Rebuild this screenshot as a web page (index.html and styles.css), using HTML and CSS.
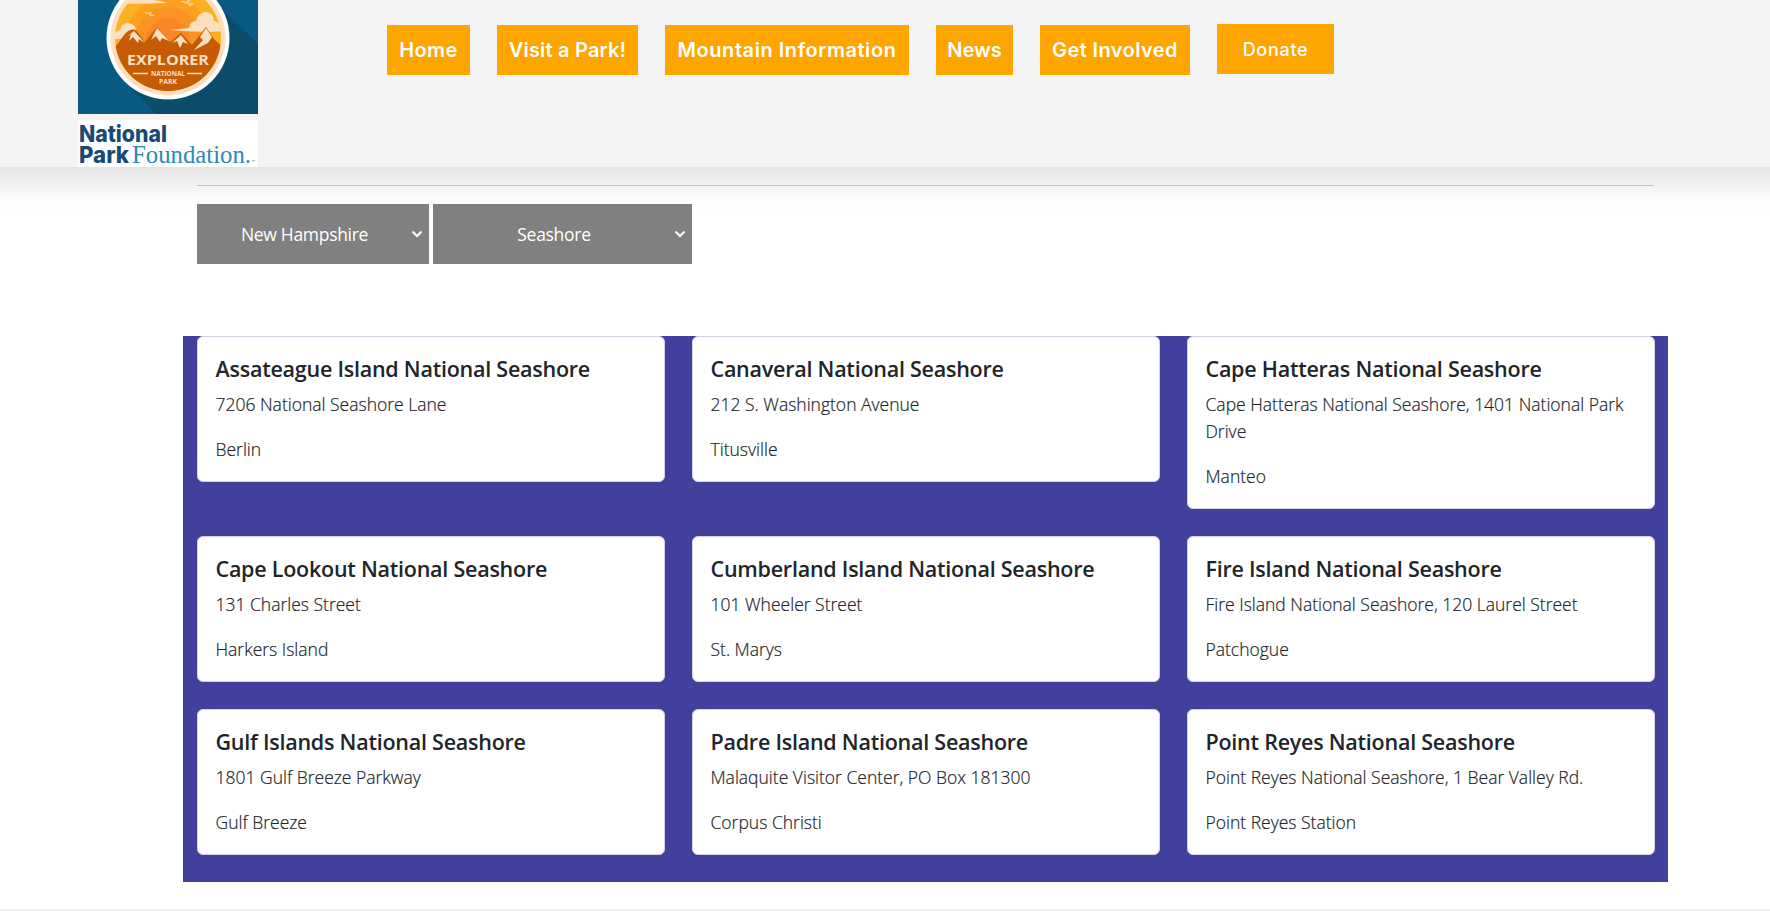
FILE: index.html
```html
<!DOCTYPE html>
<html lang="en">
<head>
<meta charset="utf-8">
<title>National Parks</title>
<link rel="stylesheet" href="styles.css">
</head>
<body>
<header class="header">
  <div class="logos">
    <svg class="badge" width="180" height="114" viewBox="0 0 180 114">
      <defs><clipPath id="disc"><circle cx="90" cy="38" r="53"/></clipPath></defs>
      <rect width="180" height="114" fill="#085a82"/>
      <path d="M134 0L180 44V114H78L46 80Z" fill="#0c4c6b"/>
      <circle cx="90" cy="38" r="61.500" fill="#fff"/>
      <circle cx="90" cy="38" r="57.500" fill="#fbdfbf"/>
      <g clip-path="url(#disc)">
        <rect x="30" y="-20" width="120" height="120" fill="#fdb022"/>
        <circle cx="90" cy="40" r="43" fill="#fea01c"/>
        <circle cx="90" cy="40" r="33" fill="#fb9323"/>
        <circle cx="90" cy="40" r="22" fill="#f98725"/>
        <path d="M36 4Q62 4 89 3Q80 0 75 0H40Z" fill="#fbdfbf"/>
        <path d="M92 30L111 28Q112 21 118 21Q120 12 128 12Q136 13 136 21Q143 22 145 31Q120 33 92 30Z" fill="#fbdfbf"/>
        <path d="M34 39Q36 31 42 30Q43 23 50 23Q58 24 58 31L60 39Z" fill="#fbdfbf"/>
        <path d="M30 52L38 46L46 35Q52 28 58 30L67 42L79 27L92 42L103 33L114 45L128 27L136 39L150 52V96H30Z" fill="#c55b05"/>
        <path d="M56 31L67 43L61 39L60 43L55 37L51 41L53 34L46 39ZM79 28L91 41L84 38L82 42L78 36L73 40ZM103 35L110 44L105 42L102 48L99 41L94 43ZM128 28L134 37L130 43L116 50L125 40L122 37Z" fill="#fbdfbf"/>
      </g>
      <path d="M67 12l4 2l2-2l-1 4l4-1M103 1l5 2l3-3l-1 4l5 0l-4 2" fill="none" stroke="#fbdfbf"/>
      <path d="M55 73.500h15M109 73.500h15" stroke="#fbdfbf" stroke-width="1.300"/>
      <g class="badge-text" fill="#fbdfbf" text-anchor="middle">
        <text x="90" y="65" font-size="14.500" textLength="82" lengthAdjust="spacingAndGlyphs">EXPLORER</text>
        <text x="90" y="76" font-size="7" textLength="34" lengthAdjust="spacingAndGlyphs">NATIONAL</text>
        <text x="90" y="84" font-size="7" textLength="18" lengthAdjust="spacingAndGlyphs">PARK</text>
      </g>
    </svg>
    <svg class="foundation" width="180" height="47" viewBox="0 0 180 47">
      <rect width="180" height="47" fill="#fff"/>
      <text class="foundation-bold" x="1" y="22" textLength="88" lengthAdjust="spacingAndGlyphs">National</text>
      <text class="foundation-bold" x="1" y="43" textLength="50" lengthAdjust="spacingAndGlyphs">Park</text>
      <text class="foundation-serif" x="54" y="43" textLength="119" lengthAdjust="spacingAndGlyphs">Foundation.</text>
      <text class="foundation-tm" x="174" y="43">™</text>
    </svg>
  </div>
  <nav class="nav">
    <a class="nav-link home">Home</a>
    <a class="nav-link visit">Visit a Park!</a>
    <a class="nav-link mountain">Mountain Information</a>
    <a class="nav-link news">News</a>
    <a class="nav-link involved">Get Involved</a>
    <a class="nav-link donate">Donate</a>
  </nav>
</header>
<main class="container">
  <hr class="rule">
  <div class="filters">
    <div class="select state"><span class="select-text">New Hampshire</span><svg class="chevron" width="12" height="8" viewBox="0 0 12 8"><path d="M1.500 1.500L6 6L10.500 1.500"/></svg></div>
    <div class="select type"><span class="select-text">Seashore</span><svg class="chevron" width="12" height="8" viewBox="0 0 12 8"><path d="M1.500 1.500L6 6L10.500 1.500"/></svg></div>
  </div>
  <section class="results">
    <article class="card"><h5>Assateague Island National Seashore</h5><p>7206 National Seashore Lane</p><p>Berlin</p></article>
    <article class="card"><h5>Canaveral National Seashore</h5><p>212 S. Washington Avenue</p><p>Titusville</p></article>
    <article class="card"><h5>Cape Hatteras National Seashore</h5><p>Cape Hatteras National Seashore, 1401 National Park Drive</p><p>Manteo</p></article>
    <article class="card"><h5>Cape Lookout National Seashore</h5><p>131 Charles Street</p><p>Harkers Island</p></article>
    <article class="card"><h5>Cumberland Island National Seashore</h5><p>101 Wheeler Street</p><p>St. Marys</p></article>
    <article class="card"><h5>Fire Island National Seashore</h5><p>Fire Island National Seashore, 120 Laurel Street</p><p>Patchogue</p></article>
    <article class="card"><h5>Gulf Islands National Seashore</h5><p>1801 Gulf Breeze Parkway</p><p>Gulf Breeze</p></article>
    <article class="card"><h5>Padre Island National Seashore</h5><p>Malaquite Visitor Center, PO Box 181300</p><p>Corpus Christi</p></article>
    <article class="card"><h5>Point Reyes National Seashore</h5><p>Point Reyes National Seashore, 1 Bear Valley Rd.</p><p>Point Reyes Station</p></article>
  </section>
</main>
<footer class="footer"></footer>
</body>
</html>
```
FILE: styles.css
```css
* { box-sizing: border-box; }
body {
  margin: 0;
  height: 911px;
  overflow: hidden;
  background: #fff;
  color: #212529;
  font-family: "Open Sans", "Noto Sans", sans-serif;
}
.header {
  position: relative;
  z-index: 1;
  display: flex;
  align-items: flex-start;
  height: 167px;
  padding-left: 78px;
  background: #f4f4f4;
  box-shadow: 0 -30px 34px 40px rgba(0, 0, 0, 0.15);
}
.logos { display: flex; flex-direction: column; gap: 6px; width: 180px; }
.logos svg { display: block; }
.foundation { overflow: visible; }
.badge-text { font-family: "Open Sans", sans-serif; font-weight: 700; }
.foundation-bold { font: 800 23px "Inter", sans-serif; fill: #174a75; }
.foundation-serif { font: 25px "Liberation Serif", serif; fill: #2c88bb; }
.foundation-tm { font: 4px "Open Sans", sans-serif; fill: #2c88bb; }
.nav { display: flex; gap: 27px; padding: 25px 0 0 129px; }
.nav-link {
  display: flex;
  align-items: center;
  justify-content: center;
  height: 50px;
  padding-bottom: 1px;
  background: #ffa500;
  color: #fff;
  font: 600 20px "Inter", sans-serif;
  letter-spacing: 0.4px;
  white-space: nowrap;
}
.home { width: 83px; }
.visit { width: 141px; letter-spacing: 0.2px; }
.mountain { width: 244px; letter-spacing: 0.55px; }
.news { width: 77px; letter-spacing: 0; }
.involved { width: 150px; }
.donate { width: 117px; margin-top: -1px; padding-bottom: 0; font-size: 18px; font-weight: 500; letter-spacing: 0.7px; }
.container { width: 1485px; margin: 0 auto 27px 183px; }
.rule { height: 1px; margin: 18px 14px; border: 0; background: #c8cacb; }
.filters { display: flex; gap: 4px; margin: 0 14px 72px; }
.select {
  display: flex;
  align-items: center;
  height: 60px;
  padding-right: 6px;
  background: #808080;
  color: #fff;
  font-size: 17.5px;
}
.state { width: 232px; }
.type { width: 259px; }
.select-text { flex: 1; padding-left: 1px; text-align: center; letter-spacing: -0.3px; }
.chevron path { fill: none; stroke: #fff; stroke-width: 2; }
.results {
  display: grid;
  grid-template-columns: repeat(3, 468px);
  align-items: start;
  gap: 27px;
  padding: 0 13px 27px 14px;
  background: #42409d;
}
.card {
  min-height: 146px;
  padding: 17.6px 18px 18.4px;
  border: 1px solid #d2d2e2;
  border-radius: 6px;
  background: #fff;
}
.card h5 { margin: 0 0 9px -0.5px; font-size: 21.5px; font-weight: 600; line-height: 27px; letter-spacing: -0.24px; white-space: nowrap; }
.card p { margin: 0 0 18px -0.5px; font-size: 17.5px; font-weight: 300; line-height: 27px; -webkit-text-stroke: 0.2px #212529; }
.card p:last-child { margin-bottom: 0; }
.footer { height: 2px; background: #f0f0f0; }
```
